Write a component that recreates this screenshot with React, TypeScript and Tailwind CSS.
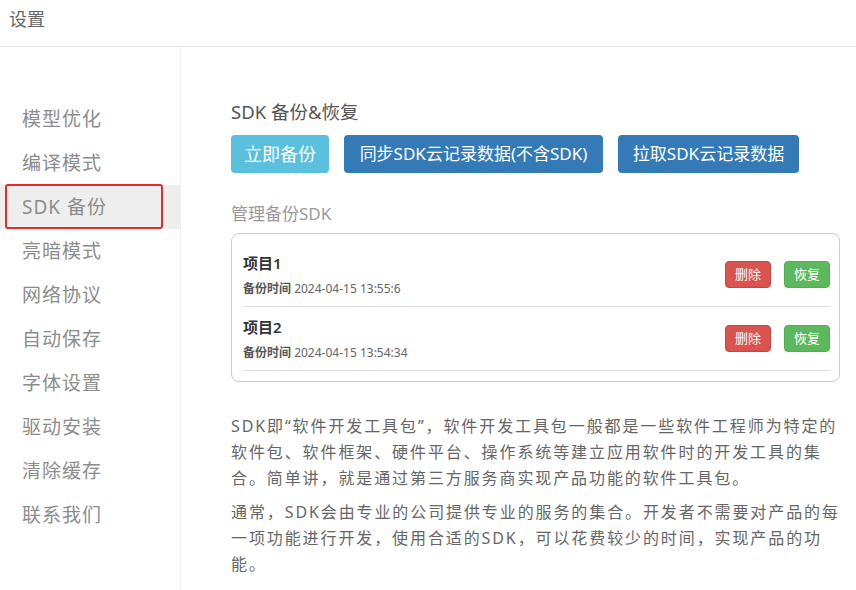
const menu = ["模型优化", "编译模式", "SDK 备份", "亮暗模式", "网络协议", "自动保存", "字体设置", "驱动安装", "清除缓存", "联系我们"];

const backups = [
  { name: "项目1", time: "2024-04-15 13:55:6" },
  { name: "项目2", time: "2024-04-15 13:54:34" },
];

const intro = [
  ["SDK即“软件开发工具包”，软件开发工具包一般都是一些软件工程师为特定的", "软件包、软件框架、硬件平台、操作系统等建立应用软件时的开发工具的集", "合。简单讲，就是通过第三方服务商实现产品功能的软件工具包。"],
  ["通常，SDK会由专业的公司提供专业的服务的集合。开发者不需要对产品的每", "一项功能进行开发，使用合适的SDK，可以花费较少的时间，实现产品的功", "能。"],
];

export default function App() {
  return (
    <div
      className="flex h-screen flex-col overflow-hidden bg-white"
      style={{ fontFamily: '"Noto Sans", "Noto Sans CJK SC", sans-serif' }}
    >
      <header className="flex h-[47px] shrink-0 items-center border-b border-[#e6e6e6] pb-[8px] pl-[9px]">
        <h1 className="text-[18px] leading-none text-[#666]">设置</h1>
      </header>

      <div className="flex min-h-0 flex-1">
        <nav className="w-[181px] shrink-0 border-r border-[#eeeeee] pt-[50px]">
          {menu.map((item) => {
            const active = item === "SDK 备份";
            return (
              <div
                key={item}
                className={`relative flex h-[44px] items-center pl-[22px] text-[19px] tracking-[1px] text-[#8c8c8c] ${active ? "bg-[#eeeeee]" : ""}`}
              >
                {item}
                {active && (
                  <span className="absolute left-[5px] top-[-1px] h-[45px] w-[158px] rounded-[3px] border-2 border-[#ec2a22]" />
                )}
              </div>
            );
          })}
        </nav>

        <main className="min-w-0 flex-1 pl-[50px] pr-[16px] pt-[51px]">
          <h2 className="h-[28px] text-[18.5px] leading-[28px] text-[#555]">SDK 备份&amp;恢复</h2>

          <div className="mt-[9px] flex gap-[15px]">
            <button className="h-[38px] w-[98px] rounded-[4px] bg-[#5bc0de] text-[18px] text-white">立即备份</button>
            <button className="h-[38px] w-[259px] whitespace-nowrap rounded-[4px] bg-[#337ab7] text-[17px] text-white">同步SDK云记录数据(不含SDK)</button>
            <button className="h-[38px] w-[181px] whitespace-nowrap rounded-[4px] bg-[#337ab7] text-[17px] text-white">拉取SDK云记录数据</button>
          </div>

          <h3 className="mt-[29px] h-[24px] text-[17px] leading-[24px] text-[#999]">管理备份SDK</h3>

          <div className="mt-[7px] rounded-[8px] border border-[#cccccc] pb-[10px] pl-[11px] pr-[9px] pt-[9px]">
            {backups.map((b) => (
              <div key={b.name} className="flex h-[64px] items-center justify-between border-b border-[#dddddd]">
                <div className="flex flex-col">
                  <span className="h-[22px] text-[15px] font-semibold leading-[22px] text-[#333]">{b.name}</span>
                  <span className="mt-[6px] h-[18px] text-[12px] leading-[18px] text-[#666]">
                    <b className="font-bold text-[#555]">备份时间</b> {b.time}
                  </span>
                </div>
                <div className="flex gap-[13px]">
                  <button className="h-[27px] w-[46px] rounded-[4px] border border-[#d43f3a] bg-[#d9534f] text-[13px] text-white">删除</button>
                  <button className="h-[27px] w-[46px] rounded-[4px] border border-[#4cae4c] bg-[#5cb85c] text-[13px] text-white">恢复</button>
                </div>
              </div>
            ))}
          </div>

          <div className="-mr-[16px] mt-[31px] whitespace-nowrap text-[16px] leading-[26px] tracking-[1.9px] text-[#666]">
            {intro.map((lines, i) => (
              <p key={i} className={i > 0 ? "mt-[8px]" : ""}>
                {lines.map((line) => (
                  <span key={line} className="block">{line}</span>
                ))}
              </p>
            ))}
          </div>
        </main>
      </div>
    </div>
  );
}
